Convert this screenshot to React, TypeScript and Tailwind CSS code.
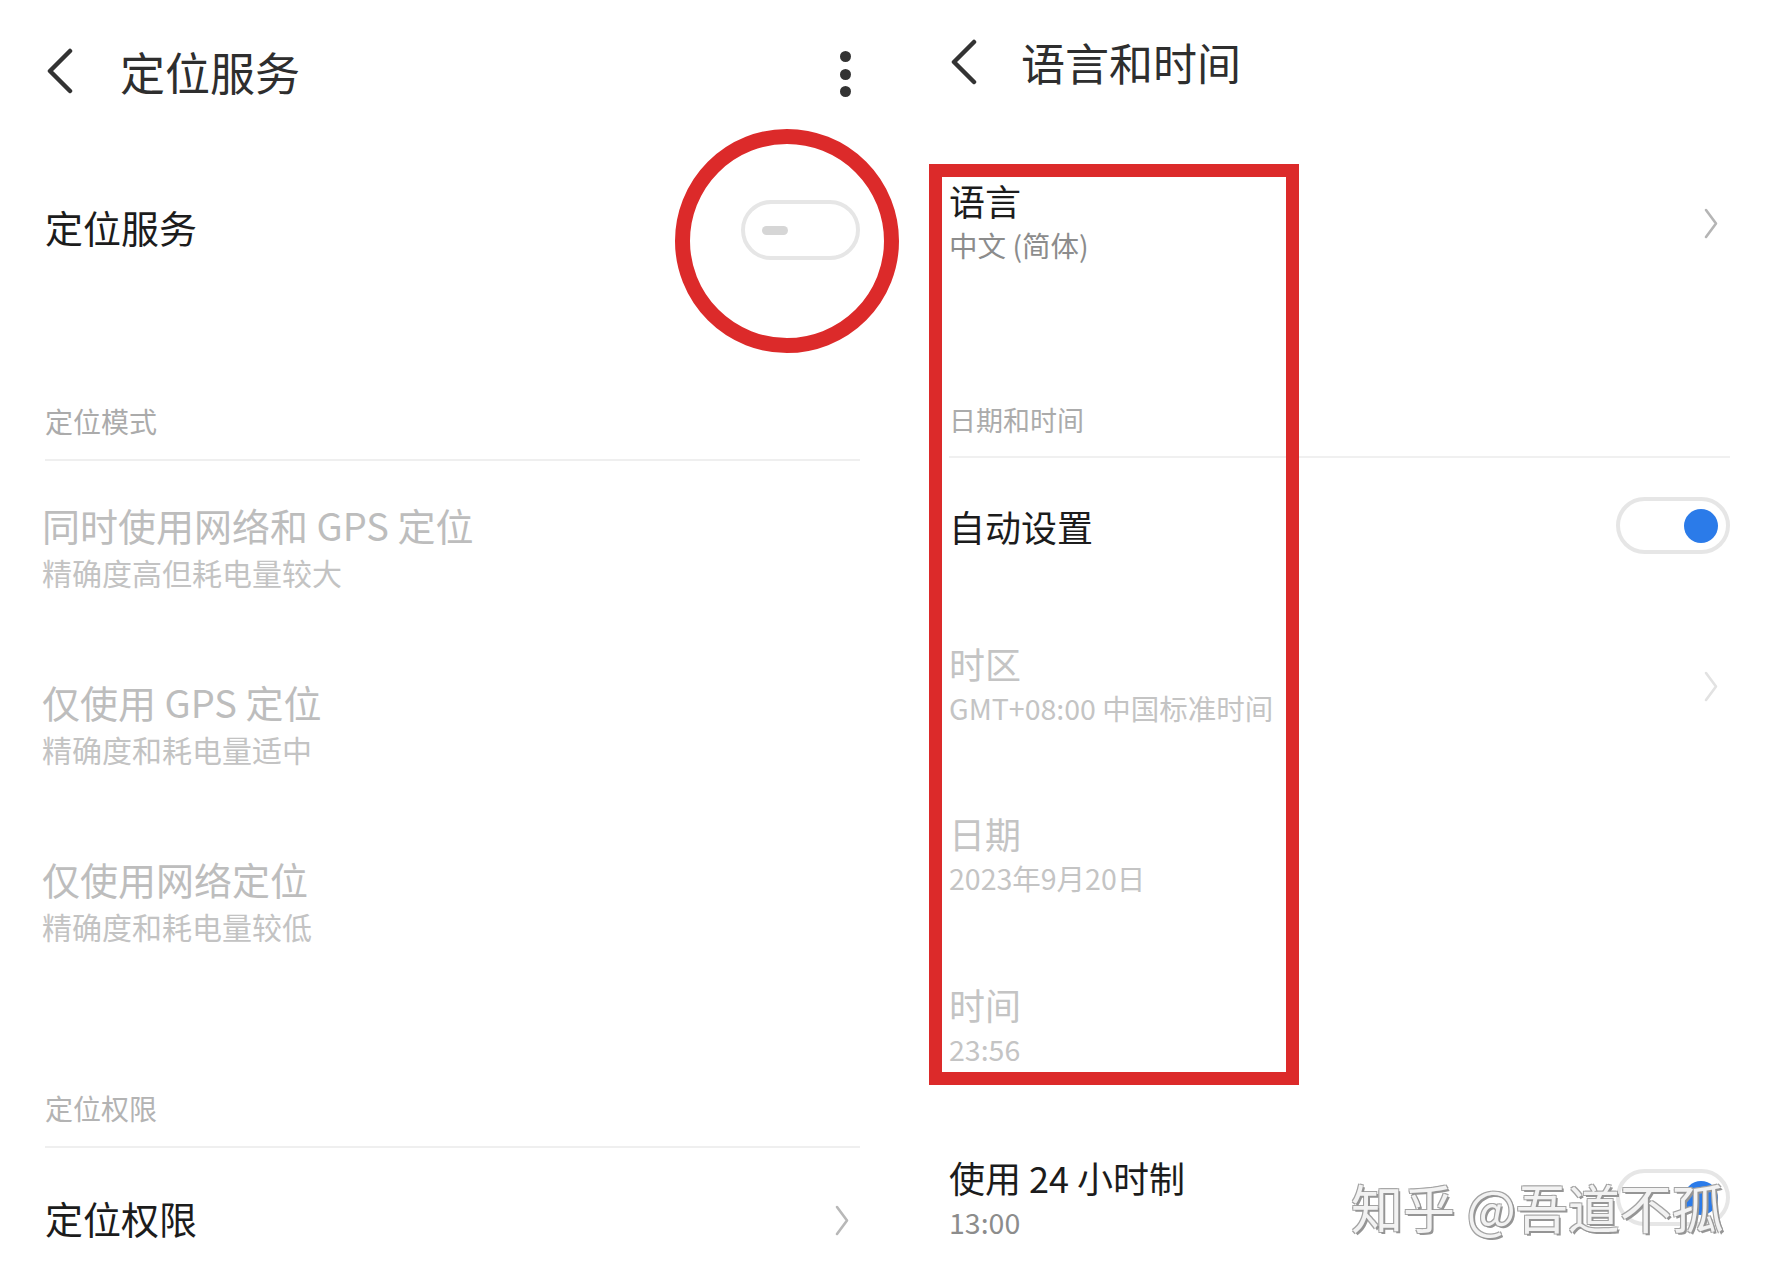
import React from "react"

function BackArrow() {
  return (
    <svg width="30" height="46" viewBox="0 0 30 46" className="shrink-0">
      <polyline points="25,3 5,23 25,43" fill="none" stroke="#333" strokeWidth="4.5" strokeLinecap="round" strokeLinejoin="round" />
    </svg>
  )
}

function Chevron({ color }: { color: string }) {
  return (
    <svg width="16" height="33" viewBox="0 0 16 33" className="shrink-0">
      <polyline points="3,3 13,16.5 3,30" fill="none" stroke={color} strokeWidth="2.6" strokeLinecap="round" strokeLinejoin="round" />
    </svg>
  )
}

function SwitchOff() {
  return (
    <div className="w-[119px] h-[60px] shrink-0 rounded-full border-4 border-[#e6e6e6] bg-white flex items-center pl-[17px]">
      <div className="w-[26px] h-[9px] rounded-full bg-[#d6d6d6]" />
    </div>
  )
}

function SwitchOn() {
  return (
    <div className="w-[114px] h-[57px] shrink-0 rounded-full border-4 border-[#e6e6e6] bg-white flex items-center justify-end pr-[8px]">
      <div className="w-[34px] h-[34px] rounded-full bg-[#2b7be9]" />
    </div>
  )
}

const modes = [
  { title: "同时使用网络和 GPS 定位", sub: "精确度高但耗电量较大" },
  { title: "仅使用 GPS 定位", sub: "精确度和耗电量适中" },
  { title: "仅使用网络定位", sub: "精确度和耗电量较低" },
]

export default function App() {
  return (
    <div className="w-[1775px] h-[1282px] overflow-hidden bg-white flex font-['Noto_Sans_CJK_SC','Noto_Sans',sans-serif]">
      {/* left screen: 定位服务 */}
      <div className="relative w-[888px] shrink-0 pl-[45px] pr-[28px] flex flex-col">
        <div className="h-[148px] pb-[6px] flex items-center">
          <BackArrow />
          <h1 className="ml-[45px] text-[45px] leading-none text-[#2e2e2e]">定位服务</h1>
          <div className="ml-auto mr-[9px] mt-[6px] flex flex-col gap-[6.5px]">
            <div className="w-[11px] h-[11px] rounded-full bg-[#333]" />
            <div className="w-[11px] h-[11px] rounded-full bg-[#333]" />
            <div className="w-[11px] h-[11px] rounded-full bg-[#333]" />
          </div>
        </div>

        <div className="h-[164px] flex items-center justify-between">
          <span className="mb-[6px] text-[38px] leading-none text-[#1c1c1c]">定位服务</span>
          <SwitchOff />
        </div>

        <div className="mt-[95px] text-[28px] leading-[28px] text-[#ababab]">定位模式</div>
        <div className="mt-[24px] h-[2px] bg-[#efefef]" />

        {modes.map((m, i) => (
          <div key={i} className="h-[177px] pt-[45px] ml-[-3px]">
            <div className="text-[38px] leading-none text-[#bdbdbd] whitespace-nowrap">{m.title}</div>
            <div className="mt-[13px] text-[30px] leading-none text-[#c3c3c3] whitespace-nowrap">{m.sub}</div>
          </div>
        ))}

        <div className="mt-[102px] text-[28px] leading-[28px] text-[#b3b3b3]">定位权限</div>
        <div className="mt-[24px] h-[2px] bg-[#efefef]" />

        <div className="mt-[51px] h-[38px] flex items-center justify-between">
          <span className="text-[38px] leading-none text-[#1c1c1c]">定位权限</span>
          <div className="mr-[10px] mt-[4px]">
            <Chevron color="#b8b8b8" />
          </div>
        </div>

        {/* red annotation circle */}
        <div className="absolute left-[675px] top-[129px] w-[224px] h-[224px] rounded-full border-[15px] border-[#dc2a2a]" />
      </div>

      {/* right screen: 语言和时间 */}
      <div className="relative flex-1 pl-[61px] pr-[45px] flex flex-col">
        <div className="h-[130px] pb-[6px] flex items-center">
          <BackArrow />
          <h1 className="ml-[42px] text-[44px] leading-none text-[#2e2e2e]">语言和时间</h1>
        </div>

        <div className="mt-[52px] flex items-center justify-between">
          <div>
            <div className="text-[36px] leading-none text-[#1c1c1c]">语言</div>
            <div className="mt-[13px] text-[28.5px] leading-none text-[#8c8c8c]">中文 (简体)</div>
          </div>
          <div className="mr-[11px] mt-[6px]">
            <Chevron color="#b5b5b5" />
          </div>
        </div>

        <div className="mt-[146px] text-[27px] leading-[28px] text-[#ababab]">日期和时间</div>
        <div className="mt-[22px] h-[2px] bg-[#f0f0f0]" />

        <div className="mt-[50px] h-[36px] flex items-center justify-between">
          <span className="text-[36px] leading-none text-[#1c1c1c]">自动设置</span>
          <SwitchOn />
        </div>

        <div className="mt-[101px] flex items-center justify-between">
          <div>
            <div className="text-[36px] leading-none text-[#c4c4c4]">时区</div>
            <div className="mt-[13px] text-[28.5px] leading-none text-[#c4c4c4] whitespace-nowrap">GMT+08:00 中国标准时间</div>
          </div>
          <div className="mr-[11px] mt-[6px]">
            <Chevron color="#e2e2e2" />
          </div>
        </div>

        <div className="mt-[93px]">
          <div className="text-[36px] leading-none text-[#c4c4c4]">日期</div>
          <div className="mt-[13px] text-[28.5px] leading-none text-[#c4c4c4]">2023年9月20日</div>
        </div>

        <div className="mt-[93px]">
          <div className="text-[36px] leading-none text-[#c4c4c4]">时间</div>
          <div className="mt-[13px] text-[28.5px] leading-none text-[#c4c4c4]">23:56</div>
        </div>

        <div className="mt-[96px] flex items-center justify-between">
          <div>
            <div className="text-[36px] leading-none text-[#1c1c1c]">使用 24 小时制</div>
            <div className="mt-[13px] text-[28.5px] leading-none text-[#8c8c8c]">13:00</div>
          </div>
          <SwitchOn />
        </div>

        {/* red annotation rectangle */}
        <div className="absolute left-[41px] top-[164px] w-[370px] h-[921px] border-[13px] border-[#dc2a2a]" />

        {/* watermark */}
        <div className="absolute left-[463px] top-[1181px] text-[52px] leading-none whitespace-nowrap text-[#f2f2f2] [text-shadow:2px_2px_0_#959595,-1px_-1px_0_#a4a4a4,1px_-1px_0_#a4a4a4,-1px_1px_0_#a4a4a4]">
          知乎 @吾道不孤
        </div>
      </div>
    </div>
  )
}
